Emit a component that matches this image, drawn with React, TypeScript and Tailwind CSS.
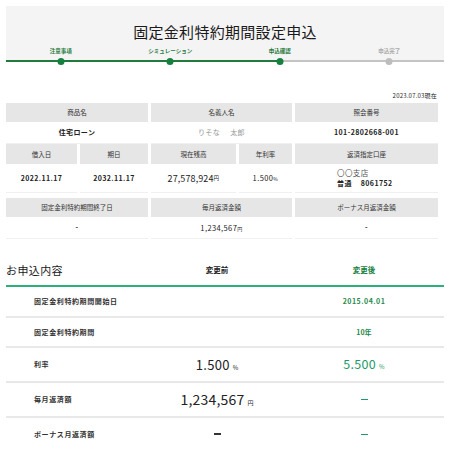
import React from "react";

const steps = [
  { label: "注意事項", left: true, right: true, done: true },
  { label: "シミュレーション", left: true, right: true, done: true },
  { label: "申込確認", left: true, right: false, done: true },
  { label: "申込完了", left: false, right: false, done: false },
];

const hdr = "bg-[#e6e6e6] flex items-center justify-center text-[6.5px] text-[#333] leading-none";
const cell = "flex items-center justify-center text-[7px] font-bold text-[#222] leading-none tracking-[0.4px] border-b border-[#f0f0f0]";

export default function App() {
  return (
    <div
      className="w-[450px] h-[450px] bg-white overflow-hidden"
      style={{ fontFamily: '"Noto Sans CJK JP", "Noto Sans", sans-serif' }}
    >
      {/* header */}
      <div className="mx-[6px] mt-[6px] bg-[#f4f4f4] pt-[15px] pb-[5px]">
        <h1 className="h-[22px] leading-[22px] text-center text-[15px] tracking-[0.3px] text-[#1a1a1a]">
          固定金利特約期間設定申込
        </h1>
        <div className="mt-[3px] grid grid-cols-4">
          {steps.map((s) => (
            <div
              key={s.label}
              className={`h-[10px] leading-[10px] text-center text-[5.5px] font-bold ${s.done ? "text-[#1f7a3c]" : "text-[#aaa]"}`}
            >
              {s.label}
            </div>
          ))}
        </div>
      </div>
      <div className="mx-[6px] -mt-[4px] grid grid-cols-4">
        {steps.map((s) => (
          <div key={s.label} className="relative h-[8px]">
            <div className={`absolute left-0 top-[3px] h-[2px] w-1/2 ${s.left ? "bg-[#1f7a3c]" : "bg-[#c4c4c4]"}`} />
            <div className={`absolute right-0 top-[3px] h-[2px] w-1/2 ${s.right ? "bg-[#1f7a3c]" : "bg-[#c4c4c4]"}`} />
            <div
              className={`absolute left-1/2 top-[0.5px] h-[7px] w-[7px] -translate-x-1/2 rounded-full ${s.done ? "bg-[#16803f]" : "bg-[#bdbdbd]"}`}
            />
          </div>
        ))}
      </div>

      {/* date */}
      <div className="mx-[13px] mt-[27px] h-[8px] leading-[8px] text-right text-[6px] text-[#222] tracking-[0.2px]">
        2023.07.03現在
      </div>

      {/* info table */}
      <div className="mx-[6px] mt-[3px] grid grid-cols-[71px_68px_85px_53px_143px] gap-x-[3px]">
        <div className={`${hdr} col-span-2 h-[19px]`}>商品名</div>
        <div className={`${hdr} col-span-2 h-[19px]`}>名義人名</div>
        <div className={`${hdr} h-[19px]`}>照会番号</div>

        <div className={`${cell} col-span-2 h-[22px]`}>住宅ローン</div>
        <div className={`${cell} col-span-2 h-[22px] !font-normal !text-[#999] gap-[10px]`}>
          <span>りそな</span>
          <span>太郎</span>
        </div>
        <div className={`${cell} h-[22px]`}>101-2802668-001</div>

        <div className={`${hdr} h-[20px]`}>借入日</div>
        <div className={`${hdr} h-[20px]`}>期日</div>
        <div className={`${hdr} h-[20px]`}>現在残高</div>
        <div className={`${hdr} h-[20px]`}>年利率</div>
        <div className={`${hdr} h-[20px]`}>返済指定口座</div>

        <div className={`${cell} h-[29px]`}>2022.11.17</div>
        <div className={`${cell} h-[29px]`}>2032.11.17</div>
        <div className={`${cell} h-[29px] !font-normal`}>
          <span className="text-[9px] tracking-[0.1px]">27,578,924</span>
          <span className="text-[5.5px] mt-[2px]">円</span>
        </div>
        <div className={`${cell} h-[29px] !font-normal`}>
          <span className="text-[7.5px]">1.500</span>
          <span className="text-[5px] mt-[1px]">%</span>
        </div>
        <div className={`${cell} h-[29px] !justify-start pl-[42px]`}>
          <div className="flex flex-col gap-[3px]">
            <span className="font-normal text-[#555] text-[7.5px]">〇〇支店</span>
            <span className="flex gap-[9px]">
              <span>普通</span>
              <span>8061752</span>
            </span>
          </div>
        </div>

        <div className={`${hdr} col-span-2 h-[19px] mt-[5px]`}>固定金利特約期間終了日</div>
        <div className={`${hdr} col-span-2 h-[19px] mt-[5px]`}>毎月返済金額</div>
        <div className={`${hdr} h-[19px] mt-[5px]`}>ボーナス月返済金額</div>

        <div className={`${cell} col-span-2 h-[22px]`}>-</div>
        <div className={`${cell} col-span-2 h-[22px] !font-normal`}>
          <span className="text-[7.5px]">1,234,567</span>
          <span className="text-[5px] mt-[1px]">円</span>
        </div>
        <div className={`${cell} h-[22px]`}>-</div>
      </div>

      {/* application content */}
      <div className="mx-[6px] mt-[16px]">
        <div className="grid grid-cols-[138px_146px_148px] h-[32px] items-center border-b-2 border-[#2bb07c]">
          <div className="text-[11px] text-[#1a1a1a] tracking-[0.4px]">お申込内容</div>
          <div className="text-center text-[7.5px] font-bold text-[#222]">変更前</div>
          <div className="text-center text-[7.5px] font-bold text-[#17803f]">変更後</div>
        </div>

        <Row label="固定金利特約期間開始日" h="h-[31px]">
          <div />
          <div className="text-center text-[7px] font-bold text-[#1f8a4c] tracking-[0.5px]">2015.04.01</div>
        </Row>
        <Row label="固定金利特約期間" h="h-[30px]">
          <div />
          <div className="text-center text-[7px] font-bold text-[#1f8a4c]">10年</div>
        </Row>
        <Row label="利率" h="h-[35px]">
          <div className="flex items-baseline justify-center text-[#222]">
            <span className="text-[13px] tracking-[0.3px]">1.500</span>
            <span className="ml-[3px] text-[6px]">%</span>
          </div>
          <div className="flex items-baseline justify-center text-[#1c9a68]">
            <span className="text-[12.5px] tracking-[0.3px]">5.500</span>
            <span className="ml-[3px] text-[6px]">%</span>
          </div>
        </Row>
        <Row label="毎月返済額" h="h-[35px]">
          <div className="flex items-baseline justify-center text-[#222]">
            <span className="text-[14px] tracking-[0.2px]">1,234,567</span>
            <span className="ml-[3px] text-[6px]">円</span>
          </div>
          <div className="flex justify-center">
            <div className="h-[1px] w-[7px] bg-[#1c9a68]" />
          </div>
        </Row>
        <Row label="ボーナス月返済額" h="h-[32px]" last>
          <div className="flex justify-center">
            <div className="h-[1.5px] w-[7px] bg-[#333]" />
          </div>
          <div className="flex justify-center">
            <div className="h-[1px] w-[7px] bg-[#1c9a68]" />
          </div>
        </Row>
      </div>
    </div>
  );
}

function Row({
  label,
  h,
  last,
  children,
}: {
  label: string;
  h: string;
  last?: boolean;
  children: React.ReactNode;
}) {
  return (
    <div
      className={`grid grid-cols-[138px_146px_148px] items-center ${h} ${last ? "" : "border-b-2 border-[#e8e8e8]"}`}
    >
      <div className="pl-[28px] text-[7px] font-bold text-[#333] tracking-[0.6px]">{label}</div>
      {children}
    </div>
  );
}
